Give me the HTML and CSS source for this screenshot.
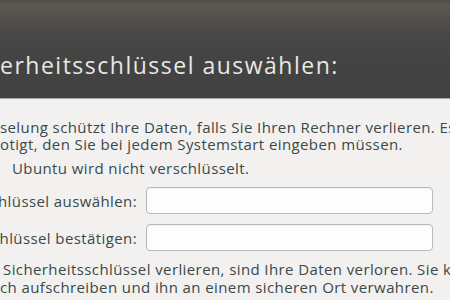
FILE: index.html
```html
<!DOCTYPE html>
<html lang="de">
<head>
  <meta charset="UTF-8" />
  <title>Sicherheitsschlüssel auswählen</title>
  <link rel="stylesheet" href="styles.css">
</head>
<body>

<div class="kopf">
  <h1 class="titel">erheitsschlüssel auswählen:</h1>
</div>

<div class="inhalt">
  <p class="zeile z1">selung schützt Ihre Daten, falls Sie Ihren Rechner verlieren. Es wird ein</p>
  <p class="zeile z2">otigt, den Sie bei jedem Systemstart eingeben müssen.</p>
  <p class="zeile z3">Ubuntu wird nicht verschlüsselt.</p>

  <div class="formular">
    <div class="reihe">
      <label class="etikett" for="schluessel1">Sicherheitsschlüssel auswählen:</label>
      <input type="password" id="schluessel1" class="feld">
    </div>
    <div class="reihe">
      <label class="etikett" for="schluessel2">Sicherheitsschlüssel bestätigen:</label>
      <input type="password" id="schluessel2" class="feld">
    </div>
  </div>

  <p class="zeile z4">Sicherheitsschlüssel verlieren, sind Ihre Daten verloren. Sie können</p>
  <p class="zeile z5">ch aufschreiben und ihn an einem sicheren Ort verwahren.</p>
</div>

</body>
</html>
```

FILE: styles.css
```css
body {
  margin: 0;
  width: 450px;
  height: 300px;
  overflow: hidden;
  background: #f2f1f0;
  font-family: 'Open Sans', 'DejaVu Sans', sans-serif;
  color: #3b4949;
}

.kopf {
  height: 99px;
  background: linear-gradient(to bottom, #4e4a46 0px, #5d5853 4px, #4b4948 30px, #434343 60px, #414141 98px);
  border-bottom: 1px solid #a9a9a9;
  box-sizing: border-box;
  overflow: hidden;
}

.titel {
  margin: 0;
  padding-top: 50px;
  font-weight: normal;
  font-size: 23px;
  letter-spacing: 1.5px;
  line-height: 30px;
  color: #ebe7e1;
  white-space: nowrap;
}

.inhalt {
  overflow: hidden;
}

.zeile {
  margin: 0;
  font-size: 15px;
  letter-spacing: 0.4px;
  line-height: 17px;
  white-space: nowrap;
}

.z1 {
  margin-top: 20px;
}

.z3 {
  margin-top: 7px;
  padding-left: 12px;
}

.formular {
  margin-top: 10px;
  display: flex;
  flex-direction: column;
  gap: 10px;
}

.reihe {
  display: grid;
  grid-template-columns: 137px 287px;
  column-gap: 9px;
  align-items: center;
}

.etikett {
  display: flex;
  justify-content: flex-end;
  font-size: 15px;
  letter-spacing: 0.4px;
  white-space: nowrap;
}

.feld {
  box-sizing: border-box;
  height: 27px;
  margin: 0;
  border: 1px solid #b9b9b9;
  border-radius: 4px;
  background: #fdfdfd;
  box-shadow: inset 0 1px 1px rgba(0,0,0,0.06);
}

.z4 {
  margin-top: 9px;
  padding-left: 3px;
  line-height: 18px;
}

.z5 {
  line-height: 18px;
}
```
